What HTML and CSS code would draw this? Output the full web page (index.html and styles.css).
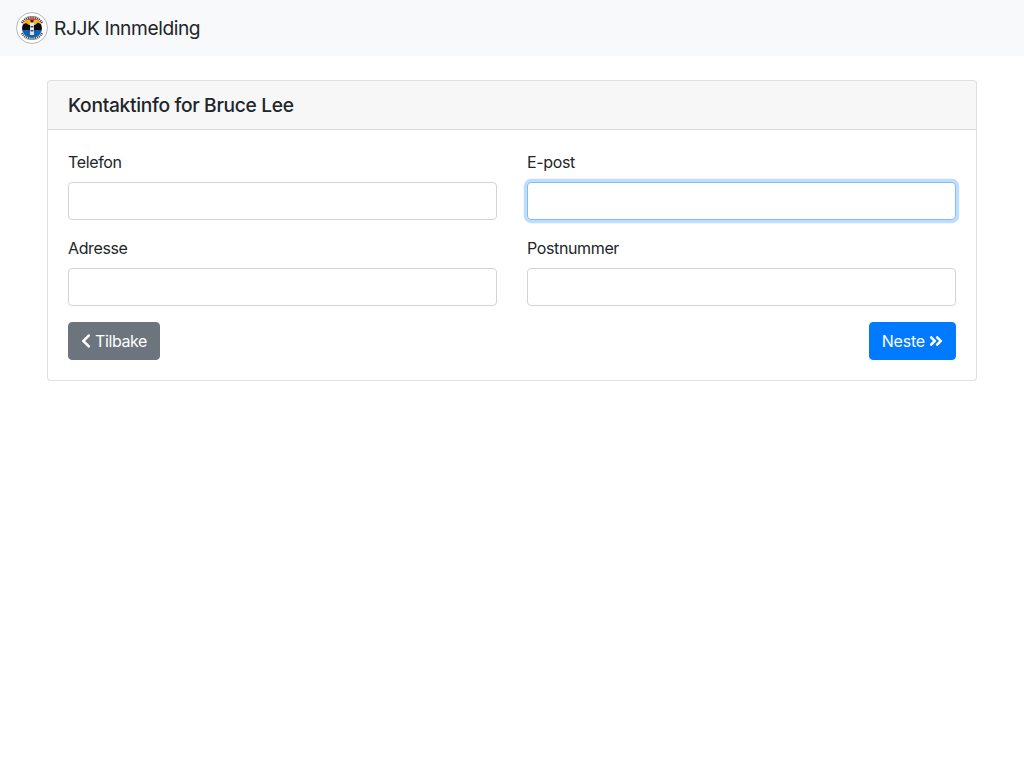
FILE: index.html
```html
<!DOCTYPE html>
<html lang="no">
<head>
<meta charset="utf-8">
<title>RJJK Innmelding</title>
<link rel="stylesheet" href="styles.css">
</head>
<body>
<nav class="navbar">
  <a class="brand" href="#">
    <svg class="logo" viewBox="0 0 32 32" width="32" height="32" aria-hidden="true">
      <circle cx="16" cy="16" r="15.5" fill="#fff" stroke="#b4b8bc" stroke-width="1"/>
      <path d="M6 11A11.5 11.5 0 0 1 26 11" fill="none" stroke="#444" stroke-width="2.6" stroke-dasharray="1.2 .7"/>
      <path d="M6 21A11.5 11.5 0 0 0 26 21" fill="none" stroke="#555" stroke-width="2.6" stroke-dasharray="1.2 .7"/>
      <clipPath id="inner"><circle cx="16" cy="16" r="10"/></clipPath>
      <g clip-path="url(#inner)">
        <rect x="5" y="5" width="22" height="5" fill="#ea3a22"/>
        <rect x="5" y="8" width="22" height="5" fill="#fbb01e"/>
        <path d="M5 13.5l5-2.5 3 2h6l3-2.5 5 3V19H5z" fill="#0a0a0a"/>
        <rect x="5" y="18" width="22" height="9" fill="#0f62b8"/>
        <rect x="14" y="10" width="4" height="13" fill="#dfe6ee"/>
        <rect x="14.5" y="8" width="3" height="2.4" fill="#222"/>
        <rect x="14.5" y="14" width="3" height="1.4" fill="#445"/>
        <rect x="14.5" y="18" width="3" height="1.4" fill="#445"/>
      </g>
    </svg>
    <span>RJJK Innmelding</span>
  </a>
</nav>
<main class="container">
  <section class="card">
    <h5 class="card-header">Kontaktinfo for Bruce Lee</h5>
    <form class="card-body">
      <div class="form-grid">
        <div class="field">
          <label for="tel">Telefon</label>
          <input id="tel" type="text">
        </div>
        <div class="field">
          <label for="epost">E-post</label>
          <input id="epost" class="focused" type="text">
        </div>
        <div class="field">
          <label for="adr">Adresse</label>
          <input id="adr" type="text">
        </div>
        <div class="field">
          <label for="post">Postnummer</label>
          <input id="post" type="text">
        </div>
      </div>
      <div class="actions">
        <button class="btn btn-secondary" type="button">
          <svg class="icon" viewBox="0 0 320 512" width="10" height="16" aria-hidden="true"><path d="M34.52 239.03L228.87 44.69c9.37-9.37 24.57-9.37 33.94 0l22.67 22.67c9.36 9.36 9.37 24.52.04 33.9L131.49 256l154.02 154.75c9.34 9.38 9.32 24.54-.04 33.9l-22.67 22.67c-9.37 9.37-24.57 9.37-33.94 0L34.52 272.97c-9.37-9.37-9.37-24.57 0-33.94z"/></svg>
          <span>Tilbake</span>
        </button>
        <button class="btn btn-primary" type="button">
          <span>Neste</span>
          <svg class="icon" viewBox="0 0 448 512" width="14" height="16" aria-hidden="true"><path d="M224.3 273l-136 136c-9.4 9.4-24.6 9.4-33.9 0l-22.6-22.6c-9.4-9.4-9.4-24.6 0-33.9l96.4-96.4-96.4-96.4c-9.4-9.4-9.4-24.6 0-33.9L54.3 103c9.4-9.4 24.6-9.4 33.9 0l136 136c9.5 9.4 9.5 24.6.1 34zm192-34l-136-136c-9.4-9.4-24.6-9.4-33.9 0l-22.6 22.6c-9.4 9.4-9.4 24.6 0 33.9l96.4 96.4-96.4 96.4c-9.4 9.4-9.4 24.6 0 33.9l22.6 22.6c9.4 9.4 24.6 9.4 33.9 0l136-136c9.4-9.2 9.4-24.4 0-33.8z"/></svg>
        </button>
      </div>
    </form>
  </section>
</main>
</body>
</html>
```
FILE: styles.css
```css
* { box-sizing: border-box; }
html, body { margin: 0; padding: 0; }
body {
  font-family: Inter, "Liberation Sans", sans-serif;
  font-size: 16px;
  line-height: 1.5;
  color: #212529;
  background: #fff;
}
.navbar {
  display: flex;
  align-items: center;
  height: 56px;
  padding: 8px 16px;
  background: #f8f9fa;
}
.brand {
  display: flex;
  align-items: center;
  gap: 6px;
  font-size: 19.2px;
  line-height: 30px;
  letter-spacing: -.42px;
  color: #212529;
  text-decoration: none;
}
.logo { display: block; flex: none; }
.container {
  width: 960px;
  margin: 0 auto;
  padding: 24px 15px 0;
}
.card {
  border: 1px solid rgba(0, 0, 0, .125);
  border-radius: 4px;
  background: #fff;
}
.card-header {
  margin: 0;
  padding: 12px 20px;
  height: 49px;
  font-size: 19.2px;
  font-weight: 500;
  line-height: 24px;
  letter-spacing: -.31px;
  background: rgba(0, 0, 0, .03);
  border-bottom: 1px solid rgba(0, 0, 0, .125);
  border-radius: 3px 3px 0 0;
}
.card-body { display: block; padding: 20px; }
.form-grid {
  display: grid;
  grid-template-columns: 1fr 1fr;
  column-gap: 30px;
}
.field { margin-bottom: 16px; }
.field label {
  display: block;
  margin-bottom: 8px;
  letter-spacing: -.37px;
}
.field input {
  display: block;
  width: 100%;
  height: 38px;
  padding: 6px 12px;
  font: inherit;
  color: #495057;
  background: #fff;
  border: 1px solid #ced4da;
  border-radius: 4px;
  outline: 0;
}
.field input.focused {
  border-color: #80bdff;
  box-shadow: 0 0 0 3.2px rgba(0, 123, 255, .25);
}
.actions { display: flex; justify-content: space-between; }
.btn {
  display: inline-flex;
  align-items: center;
  gap: 4px;
  height: 38px;
  padding: 6px 12px;
  font: inherit;
  color: #fff;
  border: 1px solid transparent;
  border-radius: 4px;
}
.btn-secondary {
  background: #6c757d;
  border-color: #6c757d;
  letter-spacing: -.4px;
}
.btn-primary {
  background: #007bff;
  border-color: #007bff;
  letter-spacing: -.2px;
}
.icon { display: block; flex: none; fill: currentColor; }
```
